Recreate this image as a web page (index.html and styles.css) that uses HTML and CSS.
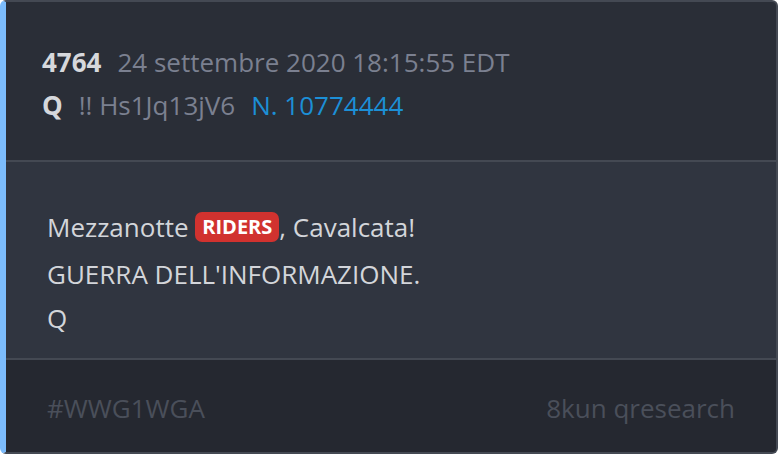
FILE: index.html
```html
<!DOCTYPE html>
<html lang="it">
<head>
  <meta charset="UTF-8" />
  <meta name="viewport" content="width=device-width, initial-scale=1.0"/>
  <title>Post 4764</title>
  <link rel="stylesheet" href="styles.css">
</head>
<body>

  <article class="post">
    <div class="post-head">
      <div class="riga">
        <strong class="numero">4764</strong>
        <span class="data">24 settembre 2020 18:15:55 EDT</span>
      </div>
      <div class="riga">
        <strong class="autore">Q</strong>
        <span class="trip">!! Hs1Jq13jV6</span>
        <a class="rif" href="#">N. 10774444</a>
      </div>
    </div>

    <div class="post-testo">
      <p>Mezzanotte <span class="tag">RIDERS</span>, Cavalcata!</p>
      <p>GUERRA DELL'INFORMAZIONE.</p>
      <p>Q</p>
    </div>

    <div class="post-piede">
      <span>#WWG1WGA</span>
      <span>8kun qresearch</span>
    </div>
  </article>

</body>
</html>
```

FILE: styles.css
```css
* {
  box-sizing: border-box;
  margin: 0;
  padding: 0;
}

body {
  font-family: 'Open Sans', sans-serif;
  background: #ffffff;
}

.post {
  width: 778px;
  height: 454px;
  background: #2a2e37;
  border: 2px solid #444953;
  border-left: 6px solid #7cbcfc;
  border-radius: 6px;
  overflow: hidden;
  display: flex;
  flex-direction: column;
}

.post-head {
  height: 160px;
  padding: 39px 36px 0;
  border-bottom: 2px solid #444953;
}

.riga {
  display: flex;
  align-items: baseline;
  gap: 16px;
  line-height: 43px;
  font-size: 26px;
  color: #7b8090;
}

.numero,
.autore {
  color: #d6d8dc;
  font-weight: 700;
}

.rif {
  color: #1c8fd6;
  text-decoration: none;
}

.post-testo {
  flex: 1;
  background: #303540;
  padding: 43px 41px 0;
  border-bottom: 2px solid #444953;
  color: #d3d5da;
  font-size: 26px;
  line-height: 44px;
}

.tag {
  background: #d1322f;
  color: #ffffff;
  font-weight: 700;
  font-size: 20px;
  padding: 1px 7px 2px;
  border-radius: 7px;
  position: relative;
  top: -3px;
}

.post-piede {
  height: 92px;
  background: #252830;
  display: flex;
  justify-content: space-between;
  align-items: center;
  padding: 4px 41px 0;
  color: #4a4f5a;
  font-size: 26px;
}
```
